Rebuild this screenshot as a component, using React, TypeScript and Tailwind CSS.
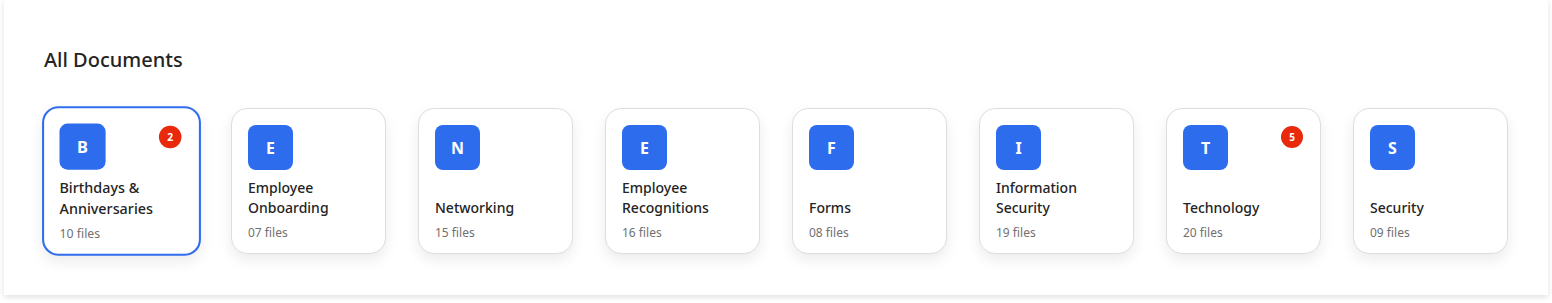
import React from "react";

type Doc = { name: string; files: string; badge?: number };

const docs: Doc[] = [
    { name: "Birthdays & Anniversaries", files: "10 files", badge: 2 },
    { name: "Employee Onboarding", files: "07 files" },
    { name: "Networking", files: "15 files" },
    { name: "Employee Recognitions", files: "16 files" },
    { name: "Forms", files: "08 files" },
    { name: "Information Security", files: "19 files" },
    { name: "Technology", files: "20 files", badge: 5 },
    { name: "Security", files: "09 files" },
];

function DocCard({ doc, active }: { doc: Doc; active: boolean }) {
    return (
        <div
            className={`relative w-[155px] shrink-0 h-[146px] rounded-2xl bg-white flex flex-col px-4 pt-4 pb-[12px] shadow-[0_6px_14px_rgba(0,0,0,0.08)] ${
                active ? "border-2 border-[#2f6ded] scale-[1.025]" : "border border-[#dedede]"
            }`}
        >
            {/* Letter tile */}
            <div
                className={`w-[45px] h-[45px] rounded-lg bg-[#2d6ded] flex items-center justify-center text-white text-[16px] font-bold ${
                    active ? "-mt-[1px] -ml-[1px]" : ""
                }`}
            >
                {doc.name[0]}
            </div>

            {doc.badge !== undefined && (
                <div className="absolute top-[17px] right-[17px] w-[22px] h-[22px] rounded-full bg-[#e8290c] flex items-center justify-center text-white text-[10px] font-bold">
                    {doc.badge}
                </div>
            )}

            <div className={`mt-auto ${active ? "-ml-[1px] -mb-[1px]" : ""}`}>
                <div className="text-[14px] leading-[20px] font-medium text-[#242424] pr-2">{doc.name}</div>
                <div className="mt-[7px] text-[12px] leading-[16px] text-[#707070]">{doc.files}</div>
            </div>
        </div>
    );
}

export default function App() {
    return (
        <div className="w-[1552px] h-[303px] bg-white px-1 font-['Noto_Sans',sans-serif]">
            <div className="bg-white shadow-[0_2px_6px_rgba(0,0,0,0.13)] px-10 pt-[46px] pb-[41px]">
                <h2 className="text-[20px] leading-[28px] font-medium text-[#242424]">All Documents</h2>
                <div className="mt-[34px] flex gap-8">
                    {docs.map((d, i) => (
                        <DocCard key={d.name} doc={d} active={i === 0} />
                    ))}
                </div>
            </div>
        </div>
    );
}
